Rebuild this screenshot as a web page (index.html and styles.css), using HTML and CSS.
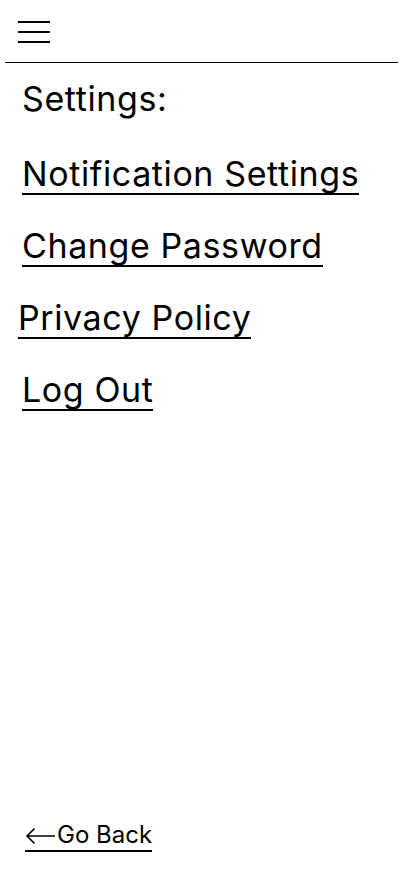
FILE: index.html
```html
<!DOCTYPE html>
<html lang="en">
<head>
<meta charset="utf-8">
<title>Settings</title>
<link rel="stylesheet" href="styles.css">
</head>
<body>
<div class="page">
  <header class="topbar">
    <button class="menu" aria-label="Menu">
      <span class="bar"></span><span class="bar"></span><span class="bar"></span>
    </button>
  </header>
  <main class="content">
    <h1 class="title">Settings:</h1>
    <nav class="links">
      <a class="link" href="#">Notification Settings</a>
      <a class="link" href="#">Change Password</a>
      <a class="link shift" href="#">Privacy Policy</a>
      <a class="link" href="#">Log Out</a>
    </nav>
  </main>
  <footer class="footer">
    <a class="back" href="#"><svg class="arrow" width="31" height="18" viewBox="0 0 31 18" aria-hidden="true"><path d="M30 9H2M9.5 1.5L2 9l7.5 7.5" fill="none" stroke="#000" stroke-width="1.6"/></svg>Go Back</a>
  </footer>
</div>
</body>
</html>
```
FILE: styles.css
```css
* { box-sizing: border-box; }
html, body { margin: 0; padding: 0; background: #fff; }
body { font-family: Inter, "Noto Sans", sans-serif; color: #000; }
.page { width: 402px; height: 874px; display: flex; flex-direction: column; }
.topbar {
  height: 63px;
  margin: 0 4px 0 5px;
  border-bottom: 1px solid #000;
  display: flex;
  align-items: flex-start;
  padding: 21px 0 0 13px;
}
.menu {
  border: 0; background: none; padding: 0;
  width: 32px;
  display: flex; flex-direction: column; gap: 8px;
}
.bar { display: block; height: 2px; background: #000; width: 32px; }
.content { padding: 0 0 0 22px; flex: 1; }
.title {
  margin: 16px 0 0;
  font-size: 34px; font-weight: 400; line-height: 40px;
  letter-spacing: 0.6px;
}
.links { display: flex; flex-direction: column; align-items: flex-start; margin-top: 36px; gap: 32px; }
.link {
  font-size: 34px; line-height: 38px; color: #000; text-decoration: none;
  letter-spacing: 0.6px;
  border-bottom: 2px solid #000;
  display: block;
}
.shift { margin-left: -4px; }
.footer { padding: 0 0 22px 25px; }
.back {
  font-size: 24px; line-height: 30px; color: #000; text-decoration: none;
  border-bottom: 2px solid #000;
  display: inline-flex; align-items: center; gap: 1px;
}
.arrow { display: block; margin-top: 1px; }
```
